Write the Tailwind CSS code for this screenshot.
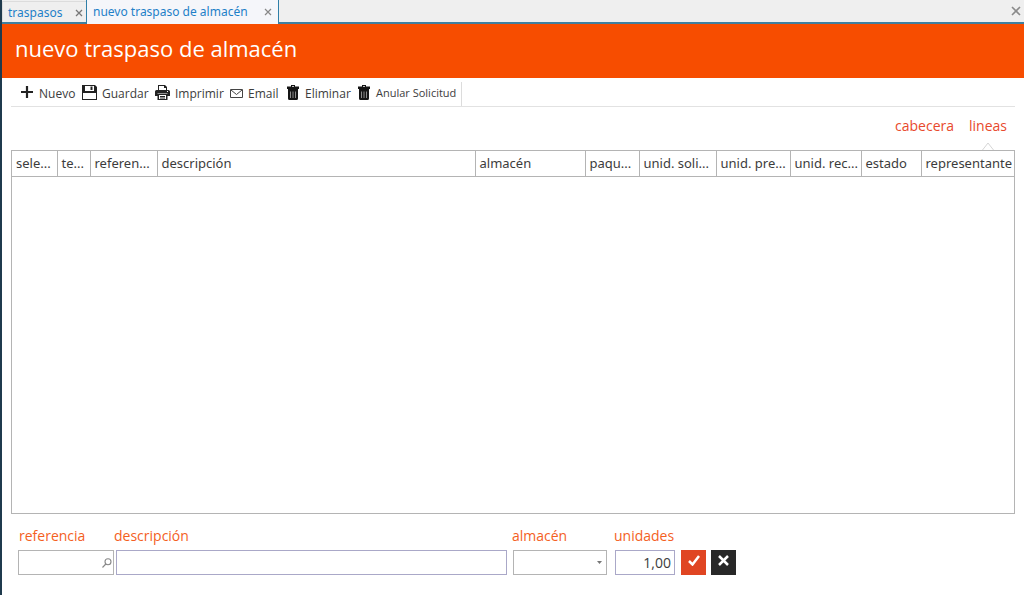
<!DOCTYPE html>
<html lang="es">
<head>
<meta charset="utf-8">
<title>nuevo traspaso de almacén</title>
<script src="https://cdn.jsdelivr.net/npm/@tailwindcss/browser@4"></script>
</head>
<body class="flex min-h-screen flex-col border-l-2 border-[#1f3a4d] bg-white font-['Open_Sans','Noto_Sans',sans-serif] text-[#3c3c3c]">
<nav class="flex h-6 items-stretch border-b-2 border-[#3f7f9f] bg-[#efefef] font-['Noto_Sans',sans-serif] text-xs text-[#1e80c8]" aria-label="Documentos">
  <div class="mt-px flex w-[84px] items-center justify-between border-t border-l border-[#dcdcdc] pt-0.5 pr-[3px] pl-[5px]">
    <a href="#traspasos">traspasos</a>
    <button type="button" aria-label="Cerrar traspasos" class="text-[#777]"><svg class="size-2" viewBox="0 0 8 8" fill="none" stroke="currentColor" stroke-width="1.3"><path d="M1 1l6 6M7 1L1 7"/></svg></button>
  </div>
  <div class="-mb-0.5 flex w-[193px] items-center justify-between border-x border-[#2f7fa8] bg-[#f5f6fa] pr-1.5 pl-1.5">
    <a href="#nuevo" aria-current="page">nuevo traspaso de almacén</a>
    <button type="button" aria-label="Cerrar nuevo traspaso" class="text-[#888]"><svg class="size-2" viewBox="0 0 8 8" fill="none" stroke="currentColor" stroke-width="1.2"><path d="M1 1l6 6M7 1L1 7"/></svg></button>
  </div>
  <button type="button" aria-label="Cerrar todo" class="mr-[3px] ml-auto text-[#8a8a8a]"><svg class="size-2.5" viewBox="0 0 10 10" fill="none" stroke="currentColor" stroke-width="1.6"><path d="M1 1l8 8M9 1L1 9"/></svg></button>
</nav>
<header class="flex h-[54px] items-center bg-[#f74d00] px-[13px] pb-1.5">
  <h1 class="text-[22px] leading-8 text-white">nuevo traspaso de almacén</h1>
</header>
<main class="flex flex-1 flex-col pr-[9px] pl-[9px]">
  <div class="flex h-[29px] items-center border-b border-[#e2e2e2] pt-1 pl-2.5 text-xs" role="toolbar" aria-label="Acciones">
    <button type="button" class="flex w-[61px] items-center gap-1.5"><svg class="mb-1 size-3" viewBox="0 0 12 12" fill="none" stroke="#222" stroke-width="2.200"><path d="M6 0v12M0 6h12"/></svg>Nuevo</button>
    <button type="button" class="flex w-[73px] items-center gap-[5px]"><svg class="mb-1 size-[15px]" viewBox="0 0 15 15"><path fill="#222" fill-rule="evenodd" d="M0 0h13l2 2v13H0zM3 1v5h9V1zM1 8v6h13V8z"/><path fill="#222" d="M8.500 1.500h2v3.500h-2z"/></svg>Guardar</button>
    <button type="button" class="flex w-[75px] items-center gap-[5px]"><svg class="mb-1 size-[15px]" viewBox="0 0 15 15"><path fill="#222" d="M3 0h7l2 2v3H3zM1.500 5h12Q15 5 15 6.500V11h-2.500V8.500h-10V11H0V6.500Q0 5 1.500 5zM2.500 9h10v6h-10z"/><path fill="#fff" d="M4 1h5v2h2v2H4zM4 10h7v4H4zM12 6h1v1h-1z"/><path stroke="#222" d="M5 11.500h5M5 13h5"/></svg>Imprimir</button>
    <button type="button" class="flex w-[57px] items-center gap-[5px]"><svg class="mb-px h-[9px] w-[13px]" viewBox="0 0 13 9" fill="none" stroke="#444"><path d="M.5.5h12v8H.5zM1 1l5.500 4.500L12 1"/></svg>Email</button>
    <button type="button" class="flex w-[71px] items-center gap-1.5"><svg class="mb-1 h-[15px] w-3" viewBox="0 0 12 15"><path fill="#151515" fill-rule="evenodd" d="M4 0h4v1.500h4V4H0V1.500h4zM5 1v.7h2V1zM1 4h10v9.500Q11 15 9.500 15h-7Q1 15 1 13.500z"/><path stroke="#aaa" stroke-width=".8" d="M3.500 6.500v6.500M6 6.500v6.500M8.500 6.500v6.500"/></svg>Eliminar</button>
    <button type="button" class="flex items-center gap-1.5"><svg class="mb-1 h-[15px] w-3" viewBox="0 0 12 15"><path fill="#151515" fill-rule="evenodd" d="M4 0h4v1.500h4V4H0V1.500h4zM5 1v.7h2V1zM1 4h10v9.500Q11 15 9.500 15h-7Q1 15 1 13.500z"/><path stroke="#aaa" stroke-width=".8" d="M3.500 6.500v6.500M6 6.500v6.500M8.500 6.500v6.500"/></svg><span class="pb-0.5 text-[11px] whitespace-nowrap">Anular Solicitud</span></button>
    <span class="ml-[5px] h-6 border-l border-[#dcdcdc]"></span>
  </div>
  <nav class="flex h-[43px] justify-end gap-[15px] pt-[9px] pr-2 text-sm leading-5 text-[#e8492c]" aria-label="Secciones">
    <a href="#cabecera">cabecera</a>
    <a href="#lineas" aria-current="page" class="flex flex-col items-center justify-between">lineas<svg class="h-2 w-3" viewBox="0 0 12 8" fill="none" stroke="#d5d5d5"><path d="M.5 8L6 1l5.500 7"/></svg></a>
  </nav>
  <section class="flex-1 border border-[#b4b4b4]">
    <table class="w-full table-fixed text-left font-['Noto_Sans',sans-serif] text-[13px]">
      <colgroup><col class="w-[45px]"><col class="w-[33px]"><col class="w-[67px]"><col><col class="w-[110px]"><col class="w-[54px]"><col class="w-[77px]"><col class="w-[74px]"><col class="w-[71px]"><col class="w-[60px]"><col class="w-[93px]"></colgroup>
      <thead>
        <tr class="h-[25px] border-b border-[#b4b4b4] leading-5 whitespace-nowrap *:border-r *:border-[#b4b4b4] *:pl-1 *:font-normal *:last:border-r-0">
          <th scope="col">sele...</th><th scope="col">te...</th><th scope="col">referen...</th><th scope="col">descripción</th><th scope="col">almacén</th><th scope="col">paqu...</th><th scope="col">unid. soli...</th><th scope="col">unid. pre...</th><th scope="col">unid. rec...</th><th scope="col">estado</th><th scope="col">representante</th>
        </tr>
      </thead>
      <tbody></tbody>
    </table>
  </section>
  <form class="flex items-end pt-3 pr-[279px] pb-5 pl-[7px] text-sm text-[#f4601e]">
    <div class="mr-0.5 w-24">
      <label for="referencia" class="block pb-1 pl-px leading-5">referencia</label>
      <div class="flex h-[25px] border border-[#b4b4b4]">
        <input id="referencia" type="text" class="min-w-0 flex-1 px-1 text-[#3c3c3c] outline-none">
        <button type="button" aria-label="Buscar referencia" class="pr-px"><svg class="size-2.5" viewBox="0 0 10 10" fill="none" stroke="#888" stroke-width="1.100"><circle cx="6" cy="3.800" r="3"/><path d="M3.800 6L.5 9.500"/></svg></button>
      </div>
    </div>
    <div class="mr-1.5 min-w-0 flex-1">
      <label for="descripcion" class="-ml-0.5 block pb-1 leading-5">descripción</label>
      <input id="descripcion" type="text" class="block h-[25px] w-full border border-[#aaa8c8] px-1 text-[#3c3c3c] outline-none">
    </div>
    <div class="mr-2 w-[94px]">
      <label for="almacen" class="-ml-px block pb-1 leading-5">almacén</label>
      <div class="grid items-center">
        <select id="almacen" class="col-start-1 row-start-1 h-[25px] w-full appearance-none border border-[#b4b4b4] bg-white px-1 text-[#3c3c3c] outline-none"><option></option></select>
        <svg class="pointer-events-none col-start-1 row-start-1 mr-[5px] h-[3px] w-[5px] justify-self-end" viewBox="0 0 5 3"><path fill="#777" d="M0 0h5L2.500 3z"/></svg>
      </div>
    </div>
    <div class="mr-1.5 w-[60px]">
      <label for="unidades" class="-ml-px block pb-1 leading-5">unidades</label>
      <input id="unidades" type="text" value="1,00" class="block h-[25px] w-full border border-[#aaa8c8] pr-[3px] text-right text-[#3c3c3c] outline-none">
    </div>
    <button type="button" aria-label="Aceptar" class="mr-[5px] grid size-[25px] shrink-0 place-items-center bg-[#e04522] pb-1"><svg class="h-[11px] w-3" viewBox="0 0 12 11" fill="none" stroke="#fff" stroke-width="2.500"><path d="M1 6l3.500 3.500L11 1"/></svg></button>
    <button type="button" aria-label="Cancelar" class="grid size-[25px] shrink-0 place-items-center bg-[#282828] pb-1"><svg class="size-[11px]" viewBox="0 0 11 11" fill="none" stroke="#fff" stroke-width="2.500"><path d="M1 1l9 9M10 1l-9 9"/></svg></button>
  </form>
</main>
</body>
</html>
